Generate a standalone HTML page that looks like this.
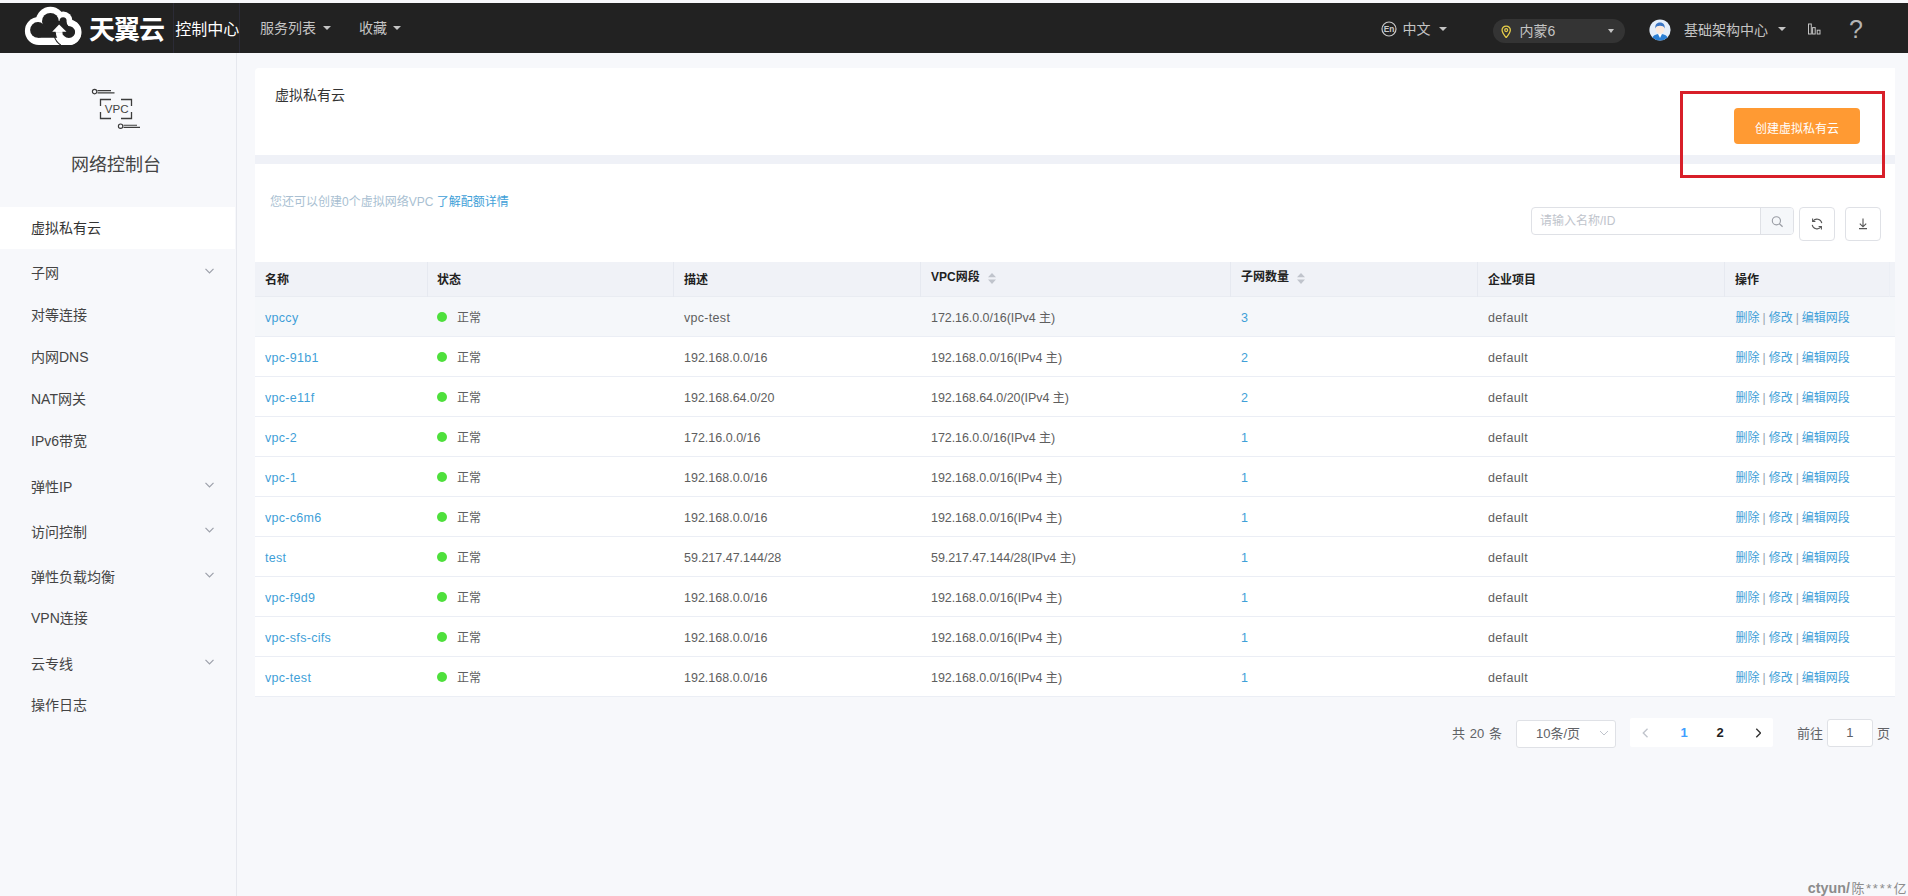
<!DOCTYPE html>
<html lang="zh-CN"><head><meta charset="utf-8"><title>网络控制台</title>
<style>
*{box-sizing:border-box;margin:0;padding:0}
html,body{width:1908px;height:896px;overflow:hidden;background:#fff}
body{position:relative;background:#f7f8fb;font-family:"Liberation Sans","Noto Sans CJK SC",sans-serif;font-size:12px;color:#555;line-height:1}
.abs{position:absolute}
/* top bar */
#top{position:absolute;left:0;top:3px;width:1908px;height:49.5px;background:#222}
.t{position:absolute;white-space:nowrap;font-size:14px;line-height:20px;color:#c4c4c4}
.caret{position:absolute;width:0;height:0;border-left:4px solid transparent;border-right:4px solid transparent;border-top:4px solid #c4c4c4}
/* sidebar */
#side{position:absolute;left:0;top:52.5px;width:237px;height:844px;background:#f7f8fb;border-right:1px solid #e6e8ee}
.m{position:absolute;left:31px;font-size:14px;line-height:20px;color:#444;white-space:nowrap}
.chev{position:absolute;left:205px;width:9px;height:6px}
/* main */
.panel{position:absolute;background:#fff}
.row{position:absolute;left:255px;width:1640px;height:40px;border-bottom:1px solid #ebeef5;background:#fff}
.row.hov{background:#f5f7fa}
.c{position:absolute;top:0;line-height:43px;white-space:nowrap;color:#5e5e5e;font-size:12px}
.lk{color:#3f9fd8}
.dot{position:absolute;left:182px;top:15px;width:10px;height:10px;border-radius:50%;background:#4ee03c}
.op{line-height:42px}
.op b{font-weight:normal;color:#9aa3ad;margin:0 3px}
.th{position:absolute;top:0;line-height:37.4px;font-weight:bold;color:#222;font-size:12px;white-space:nowrap}
.sep{position:absolute;top:0;width:1px;height:35px;background:#e6e9f0}
.l{font-size:12.5px;line-height:43px}
.a{letter-spacing:0.3px}
.n{letter-spacing:-0.06px}
.l u{font-size:12px;text-decoration:none;letter-spacing:0}

</style></head><body>
<div id="top"></div>
<!-- logo -->
<svg class="abs" style="left:20px;top:3px" width="70" height="48" viewBox="20 3 70 48">
<g fill="#fff">
<circle cx="38.9" cy="31" r="14"/>
<circle cx="50.4" cy="21.3" r="14.5"/>
<circle cx="63.2" cy="20.9" r="9.3"/>
<circle cx="68.6" cy="32.6" r="12.5"/>
<rect x="38.9" y="31" width="29.7" height="14"/>
</g>
<g fill="#222">
<circle cx="37.9" cy="29.9" r="7.8"/>
<circle cx="50.4" cy="21.3" r="8.4"/>
<circle cx="63.1" cy="20.8" r="3.5"/>
<circle cx="68.8" cy="31.3" r="6.7"/>
<polygon points="37.9,22.1 45,27 50.4,21.3 63.1,20.8 66.5,21.8 68.8,31.3 60,37.7 37.9,37.7"/>
</g>
<path d="M67.86 22.74 A9.6 9.6 0 1 1 59.10 32.30" fill="none" stroke="#fff" stroke-width="6.4"/>
<polygon points="59.1,24.4 52.2,31.8 55.6,31.8 55.6,32.6 62.4,32.6 62.4,31.8 66.5,31.8" fill="#fff"/>
<path d="M54.36 36.69 A15 15 0 0 0 60.75 45.02" fill="none" stroke="#222" stroke-width="1.1"/>
</svg>
<div class="abs" style="left:89px;top:13px;font-size:26px;line-height:34px;font-weight:bold;color:#fff;letter-spacing:-1.0px;white-space:nowrap">天翼云</div>
<div class="abs" style="left:175.3px;top:18.5px;font-size:16px;line-height:22px;color:#fff;white-space:nowrap">控制中心</div>
<div class="abs" style="left:173px;top:3px;width:1px;height:50px;background:#2b2b36"></div>
<div class="abs" style="left:238.5px;top:3px;width:1px;height:50px;background:#2b2b36"></div>
<div id="topnav">
<span class="t" style="left:260px;top:18px">服务列表</span><i class="caret" style="left:323px;top:26px"></i>
<span class="t" style="left:359px;top:18px">收藏</span><i class="caret" style="left:393px;top:26px"></i>
<!-- En icon -->
<svg class="abs" style="left:1381px;top:21px" width="16" height="16" viewBox="0 0 16 16"><circle cx="8" cy="8" r="7" fill="none" stroke="#c8c8c8" stroke-width="1.2"/><text x="8" y="11" font-size="8.4" font-weight="bold" text-anchor="middle" fill="#c8c8c8" font-family="Liberation Sans, sans-serif">En</text></svg>
<span class="t" style="left:1402.5px;top:19px">中文</span><i class="caret" style="left:1439px;top:27px"></i>
<div class="abs" style="left:1493px;top:19px;width:132px;height:24px;border-radius:12px;background:#343434"></div>
<svg class="abs" style="left:1501px;top:24.5px" width="10.4" height="13.8" viewBox="0 0 12 16"><path d="M6 1.2 C3.2 1.2 1.2 3.3 1.2 5.9 C1.2 9 6 14.6 6 14.6 C6 14.6 10.8 9 10.8 5.9 C10.8 3.3 8.8 1.2 6 1.2 Z" fill="none" stroke="#e8cf4a" stroke-width="1.5"/><circle cx="6" cy="5.9" r="1.7" fill="none" stroke="#e8cf4a" stroke-width="1.4"/></svg>
<span class="t" style="left:1519.5px;top:21px">内蒙6</span><i class="caret" style="left:1608px;top:29px;border-left-width:3.5px;border-right-width:3.5px"></i>
<!-- avatar -->
<svg class="abs" style="left:1649px;top:19px" width="22" height="22" viewBox="0 0 22 22"><defs><clipPath id="av"><circle cx="11" cy="11" r="10.6"/></clipPath></defs><circle cx="11" cy="11" r="10.6" fill="#e4eefa"/><g clip-path="url(#av)"><path d="M2 22 C3 16 7 15 11 15 C15 15 19 16 20 22 Z" fill="#2b7fd3"/><path d="M9 15 L11 19 L13 15 Z" fill="#fff"/><ellipse cx="11" cy="10" rx="4.3" ry="5" fill="#fbe9dc"/><path d="M6.3 9.5 C6 5 8.5 3.6 11 3.6 C13.5 3.6 16 5 15.7 9.5 C15 7.5 13.5 6.8 11 6.8 C8.5 6.8 7 7.5 6.3 9.5 Z" fill="#3b76c4"/></g></svg>
<span class="t" style="left:1684px;top:20px">基础架构中心</span><i class="caret" style="left:1778px;top:27px"></i>
<svg class="abs" style="left:1806px;top:22px" width="16" height="14" viewBox="1806 22 16 14"><g fill="none" stroke="#c4c4c4" stroke-width="1"><rect x="1808.5" y="24" width="2.8" height="10"/><rect x="1812.6" y="27.6" width="2.6" height="6.4"/><rect x="1817.2" y="30.2" width="2.8" height="3.8"/></g></svg>
<span class="t" style="left:1849px;top:14px;font-size:25px;line-height:30px;color:#b4b4b4">?</span>
</div>

<div id="side">
</div>
<svg class="abs" style="left:90px;top:86px" width="52" height="46" viewBox="90 86 52 46">
<g fill="none" stroke="#3c3c3c" stroke-width="1.15">
<circle cx="94.6" cy="91.6" r="2.2"/><path d="M97.5 90.6 H111 M97.5 92.8 H114.5"/>
<circle cx="120.6" cy="126.2" r="2.2"/><path d="M123.5 125.2 H137 M123.5 127.4 H140"/>
<path d="M100.5 106 V99.5 H111 M121 99.5 H131.5 V106 M131.5 112 V118.5 H121 M111 118.5 H100.5 V112" stroke-width="1.3"/>
</g>
<text x="116.6" y="113.4" font-size="11.6" text-anchor="middle" fill="#444" font-family="Liberation Sans, sans-serif">VPC</text>
</svg>
<div class="abs" style="left:0;top:155px;width:236px;text-align:center;font-size:18px;line-height:20px;color:#444;padding-right:4px">网络控制台</div>
<div class="abs" style="left:0;top:207px;width:234.5px;height:42px;background:#fff"></div>
<div id="menu">
<span class="m" style="top:218px;color:#333">虚拟私有云</span>
<span class="m" style="top:263px">子网</span>
<span class="m" style="top:305px">对等连接</span>
<span class="m" style="top:347px">内网DNS</span>
<span class="m" style="top:389px">NAT网关</span>
<span class="m" style="top:431px">IPv6带宽</span>
<span class="m" style="top:477px">弹性IP</span>
<span class="m" style="top:522px">访问控制</span>
<span class="m" style="top:567px">弹性负载均衡</span>
<span class="m" style="top:608px">VPN连接</span>
<span class="m" style="top:654px">云专线</span>
<span class="m" style="top:695px">操作日志</span>
<svg class="chev" style="top:268px" viewBox="0 0 9 6"><path d="M0.5 0.8 L4.5 4.8 L8.5 0.8" fill="none" stroke="#9da1aa" stroke-width="1.2"/></svg>
<svg class="chev" style="top:482px" viewBox="0 0 9 6"><path d="M0.5 0.8 L4.5 4.8 L8.5 0.8" fill="none" stroke="#9da1aa" stroke-width="1.2"/></svg>
<svg class="chev" style="top:527px" viewBox="0 0 9 6"><path d="M0.5 0.8 L4.5 4.8 L8.5 0.8" fill="none" stroke="#9da1aa" stroke-width="1.2"/></svg>
<svg class="chev" style="top:572px" viewBox="0 0 9 6"><path d="M0.5 0.8 L4.5 4.8 L8.5 0.8" fill="none" stroke="#9da1aa" stroke-width="1.2"/></svg>
<svg class="chev" style="top:659px" viewBox="0 0 9 6"><path d="M0.5 0.8 L4.5 4.8 L8.5 0.8" fill="none" stroke="#9da1aa" stroke-width="1.2"/></svg>
</div>

<!-- panel 1 -->
<div class="panel" style="left:255px;top:67.5px;width:1639.6px;height:87px;border-radius:4px 0 0 0"></div>
<div class="abs" style="left:255px;top:154.5px;width:1640px;height:9.5px;background:#eff1f7"></div>
<div class="abs" style="left:275px;top:85px;font-size:14px;line-height:20px;color:#333;white-space:nowrap">虚拟私有云</div>
<!-- panel 2 -->
<div class="panel" style="left:255px;top:164px;width:1640px;height:533px"></div>
<div class="abs" style="left:270px;top:194px;font-size:12px;line-height:16px;color:#a9bfd2;white-space:nowrap">您还可以创建0个虚拟网络VPC <span style="color:#3f9fd8">了解配额详情</span></div>
<!-- create button + red box -->
<div class="abs" style="left:1734px;top:108px;width:126px;height:36px;border-radius:4px;background:#ff9a33;color:#fff;font-size:12px;line-height:42px;text-align:center;white-space:nowrap">创建虚拟私有云</div>
<div class="abs" style="left:1680px;top:91px;width:205px;height:87px;border:3px solid #d81f29"></div>
<!-- search -->
<div class="abs" style="left:1531px;top:207px;width:263px;height:28px;border:1px solid #dfe1e6;border-radius:4px;background:#fff"></div>
<div class="abs" style="left:1760px;top:208px;width:33px;height:26px;border-left:1px solid #dfe1e6;background:#f5f7fa;border-radius:0 3px 3px 0"></div>
<div class="abs" style="left:1540px;top:213px;font-size:12px;line-height:16px;color:#c0c4cc;white-space:nowrap">请输入名称/ID</div>
<svg class="abs" style="left:1770px;top:214px" width="14" height="14" viewBox="0 0 14 14"><circle cx="6.4" cy="6.8" r="4.1" fill="none" stroke="#9a9da5" stroke-width="1.1"/><path d="M9.4 9.8 L12.6 12.8" stroke="#9a9da5" stroke-width="1.2"/></svg>
<div class="abs" style="left:1799px;top:207px;width:36px;height:34px;border:1px solid #dfe1e6;border-radius:4px;background:#fff"></div>
<svg class="abs" style="left:1810px;top:217px" width="14" height="14" viewBox="0 0 14 14"><g fill="none" stroke="#555" stroke-width="1.05" transform="translate(14,0) scale(-1,1)"><path d="M2.2 6.2 A4.9 4.9 0 0 1 11 4.2"/><path d="M11.8 7.8 A4.9 4.9 0 0 1 3 9.8"/><path d="M11.4 1.6 V4.4 H8.6"/><path d="M2.6 12.4 V9.6 H5.4"/></g></svg>
<div class="abs" style="left:1845px;top:207px;width:36px;height:34px;border:1px solid #dfe1e6;border-radius:4px;background:#fff"></div>
<svg class="abs" style="left:1856px;top:217px" width="14" height="14" viewBox="0 0 14 14"><g fill="none" stroke="#555" stroke-width="1.1"><path d="M7 1.5 V9.5 M3.8 6.6 L7 9.8 L10.2 6.6 M3 11.6 H11"/></g></svg>
<!-- table header -->
<div class="abs" style="left:255px;top:262px;width:1640px;height:35px;background:#f0f2f7;border-bottom:1px solid #e9ecf2">
<span class="th" style="left:10px">名称</span>
<span class="th" style="left:182px">状态</span>
<span class="th" style="left:429px">描述</span>
<span class="th" style="left:676px;line-height:31.6px">VPC网段</span>
<span class="th" style="left:986px;line-height:31.6px">子网数量</span>
<span class="th" style="left:1233px">企业项目</span>
<span class="th" style="left:1480px">操作</span>
<i class="sep" style="left:172px"></i><i class="sep" style="left:418.3px"></i><i class="sep" style="left:665px"></i><i class="sep" style="left:975px"></i><i class="sep" style="left:1221.8px"></i><i class="sep" style="left:1468.8px"></i><i class="sep" style="left:1634px;background:#eceff5"></i>
<svg class="abs" style="left:732px;top:10px" width="10" height="13" viewBox="0 0 10 13"><path d="M5 1 L9 5.2 H1 Z M5 12 L9 7.4 H1 Z" fill="#c0c4cc"/></svg>
<svg class="abs" style="left:1041px;top:10px" width="10" height="13" viewBox="0 0 10 13"><path d="M5 1 L9 5.2 H1 Z M5 12 L9 7.4 H1 Z" fill="#c0c4cc"/></svg>
</div>
<div class="row hov" style="top:297px">
<span class="c l a lk" style="left:10px">vpccy</span>
<i class="dot"></i><span class="c" style="left:202px">正常</span>
<span class="c l a" style="left:429px">vpc-test</span>
<span class="c l n" style="left:676px">172.16.0.0/16(IPv4 <u>主</u>)</span>
<span class="c l lk" style="left:986px">3</span>
<span class="c l a" style="left:1233px;letter-spacing:.36px">default</span>
<span class="c lk op" style="left:1480.5px">删除<b>|</b>修改<b>|</b>编辑网段</span>
</div>
<div class="row" style="top:337px">
<span class="c l a lk" style="left:10px">vpc-91b1</span>
<i class="dot"></i><span class="c" style="left:202px">正常</span>
<span class="c l" style="left:429px">192.168.0.0/16</span>
<span class="c l n" style="left:676px">192.168.0.0/16(IPv4 <u>主</u>)</span>
<span class="c l lk" style="left:986px">2</span>
<span class="c l a" style="left:1233px;letter-spacing:.36px">default</span>
<span class="c lk op" style="left:1480.5px">删除<b>|</b>修改<b>|</b>编辑网段</span>
</div>
<div class="row" style="top:377px">
<span class="c l a lk" style="left:10px">vpc-e11f</span>
<i class="dot"></i><span class="c" style="left:202px">正常</span>
<span class="c l" style="left:429px">192.168.64.0/20</span>
<span class="c l n" style="left:676px">192.168.64.0/20(IPv4 <u>主</u>)</span>
<span class="c l lk" style="left:986px">2</span>
<span class="c l a" style="left:1233px;letter-spacing:.36px">default</span>
<span class="c lk op" style="left:1480.5px">删除<b>|</b>修改<b>|</b>编辑网段</span>
</div>
<div class="row" style="top:417px">
<span class="c l a lk" style="left:10px">vpc-2</span>
<i class="dot"></i><span class="c" style="left:202px">正常</span>
<span class="c l" style="left:429px">172.16.0.0/16</span>
<span class="c l n" style="left:676px">172.16.0.0/16(IPv4 <u>主</u>)</span>
<span class="c l lk" style="left:986px">1</span>
<span class="c l a" style="left:1233px;letter-spacing:.36px">default</span>
<span class="c lk op" style="left:1480.5px">删除<b>|</b>修改<b>|</b>编辑网段</span>
</div>
<div class="row" style="top:457px">
<span class="c l a lk" style="left:10px">vpc-1</span>
<i class="dot"></i><span class="c" style="left:202px">正常</span>
<span class="c l" style="left:429px">192.168.0.0/16</span>
<span class="c l n" style="left:676px">192.168.0.0/16(IPv4 <u>主</u>)</span>
<span class="c l lk" style="left:986px">1</span>
<span class="c l a" style="left:1233px;letter-spacing:.36px">default</span>
<span class="c lk op" style="left:1480.5px">删除<b>|</b>修改<b>|</b>编辑网段</span>
</div>
<div class="row" style="top:497px">
<span class="c l a lk" style="left:10px">vpc-c6m6</span>
<i class="dot"></i><span class="c" style="left:202px">正常</span>
<span class="c l" style="left:429px">192.168.0.0/16</span>
<span class="c l n" style="left:676px">192.168.0.0/16(IPv4 <u>主</u>)</span>
<span class="c l lk" style="left:986px">1</span>
<span class="c l a" style="left:1233px;letter-spacing:.36px">default</span>
<span class="c lk op" style="left:1480.5px">删除<b>|</b>修改<b>|</b>编辑网段</span>
</div>
<div class="row" style="top:537px">
<span class="c l a lk" style="left:10px">test</span>
<i class="dot"></i><span class="c" style="left:202px">正常</span>
<span class="c l" style="left:429px">59.217.47.144/28</span>
<span class="c l n" style="left:676px">59.217.47.144/28(IPv4 <u>主</u>)</span>
<span class="c l lk" style="left:986px">1</span>
<span class="c l a" style="left:1233px;letter-spacing:.36px">default</span>
<span class="c lk op" style="left:1480.5px">删除<b>|</b>修改<b>|</b>编辑网段</span>
</div>
<div class="row" style="top:577px">
<span class="c l a lk" style="left:10px">vpc-f9d9</span>
<i class="dot"></i><span class="c" style="left:202px">正常</span>
<span class="c l" style="left:429px">192.168.0.0/16</span>
<span class="c l n" style="left:676px">192.168.0.0/16(IPv4 <u>主</u>)</span>
<span class="c l lk" style="left:986px">1</span>
<span class="c l a" style="left:1233px;letter-spacing:.36px">default</span>
<span class="c lk op" style="left:1480.5px">删除<b>|</b>修改<b>|</b>编辑网段</span>
</div>
<div class="row" style="top:617px">
<span class="c l a lk" style="left:10px">vpc-sfs-cifs</span>
<i class="dot"></i><span class="c" style="left:202px">正常</span>
<span class="c l" style="left:429px">192.168.0.0/16</span>
<span class="c l n" style="left:676px">192.168.0.0/16(IPv4 <u>主</u>)</span>
<span class="c l lk" style="left:986px">1</span>
<span class="c l a" style="left:1233px;letter-spacing:.36px">default</span>
<span class="c lk op" style="left:1480.5px">删除<b>|</b>修改<b>|</b>编辑网段</span>
</div>
<div class="row" style="top:657px">
<span class="c l a lk" style="left:10px">vpc-test</span>
<i class="dot"></i><span class="c" style="left:202px">正常</span>
<span class="c l" style="left:429px">192.168.0.0/16</span>
<span class="c l n" style="left:676px">192.168.0.0/16(IPv4 <u>主</u>)</span>
<span class="c l lk" style="left:986px">1</span>
<span class="c l a" style="left:1233px;letter-spacing:.36px">default</span>
<span class="c lk op" style="left:1480.5px">删除<b>|</b>修改<b>|</b>编辑网段</span>
</div>
<!-- pagination -->
<div class="abs" style="left:1452px;top:725px;font-size:13px;line-height:18px;color:#606266;white-space:nowrap;word-spacing:1.2px">共 20 条</div>
<div class="abs" style="left:1516px;top:720px;width:100px;height:28px;border:1px solid #dfe1e6;border-radius:3px;background:#fff"></div>
<div class="abs" style="left:1536px;top:725px;font-size:13px;line-height:18px;color:#606266;white-space:nowrap">10条/页</div>
<svg class="abs" style="left:1599px;top:729.5px" width="10" height="7" viewBox="0 0 10 7"><path d="M1 1 L5 5 L9 1" fill="none" stroke="#c0c4cc" stroke-width="1"/></svg>
<div class="abs" style="left:1630px;top:718px;width:143px;height:29px;background:#fff;border-radius:2px"></div>
<svg class="abs" style="left:1641.5px;top:728px" width="6.8" height="10.2" viewBox="0 0 8 12"><path d="M6.5 1 L1.5 6 L6.5 11" fill="none" stroke="#c0c4cc" stroke-width="1.6"/></svg>
<div class="abs" style="left:1666px;top:724px;width:36px;text-align:center;font-size:13px;line-height:18px;font-weight:bold;color:#409eff">1</div>
<div class="abs" style="left:1702px;top:724px;width:36px;text-align:center;font-size:13px;line-height:18px;font-weight:bold;color:#222">2</div>
<svg class="abs" style="left:1754.5px;top:728px" width="6.8" height="10.2" viewBox="0 0 8 12"><path d="M1.5 1 L6.5 6 L1.5 11" fill="none" stroke="#333" stroke-width="1.6"/></svg>
<div class="abs" style="left:1797px;top:725px;font-size:13px;line-height:18px;color:#606266;white-space:nowrap">前往</div>
<div class="abs" style="left:1827px;top:719px;width:45.5px;height:28px;border:1px solid #dfe1e6;border-radius:3px;background:#fff;text-align:center;font-size:13px;line-height:26px;color:#606266">1</div>
<div class="abs" style="left:1877px;top:725px;font-size:13px;line-height:18px;color:#606266;white-space:nowrap">页</div>
<!-- watermark -->
<div class="abs" style="left:1807.8px;top:878px;font-size:13px;line-height:20px;color:#8c8c8c;white-space:nowrap"><b style="font-size:14.3px;margin-right:1.5px">ctyun/</b>陈<span style="letter-spacing:1.85px;margin-left:1.5px">****</span>亿</div>

</body></html>
